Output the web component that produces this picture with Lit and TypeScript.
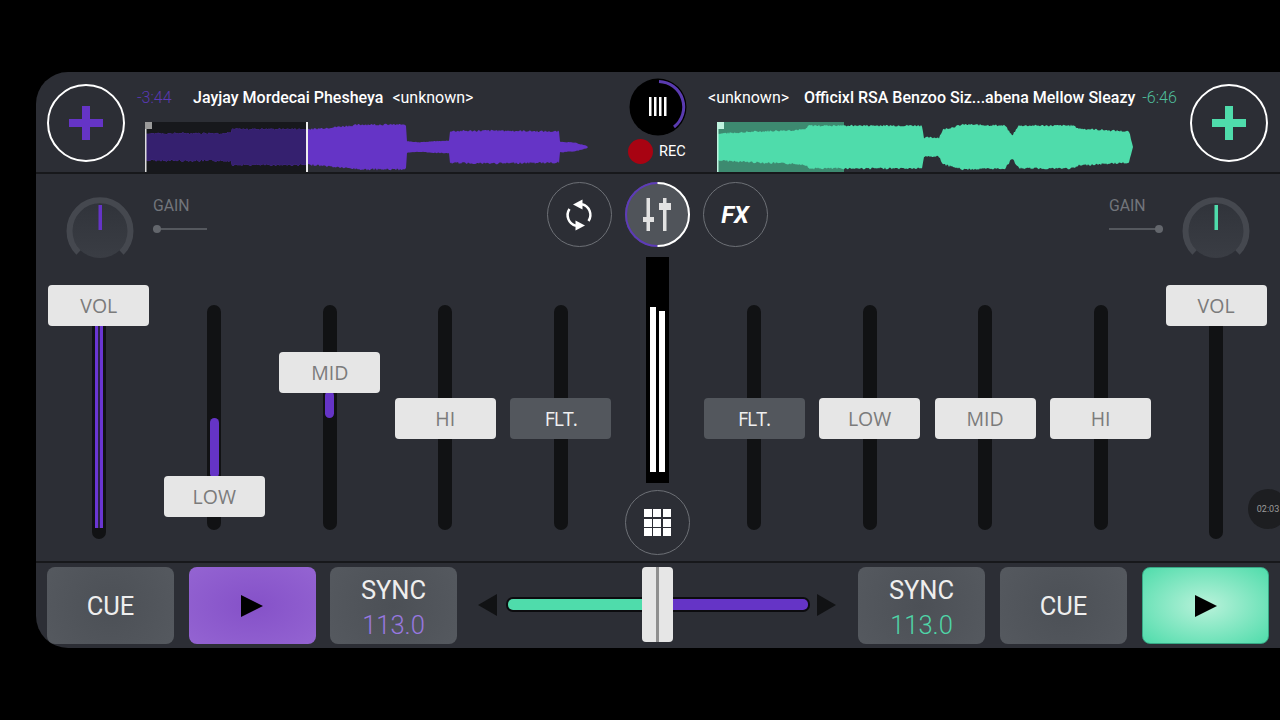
import { LitElement, html, css, svg, unsafeCSS } from "lit";
import { customElement } from "lit/decorators.js";

const PURPLE = "#6534c6";
const GREEN = "#4fdcab";

type Pt = [number, number];

function envelope(points: Pt[]): string {
  const top: string[] = [];
  const bottom: string[] = [];
  let seed = 7;
  const rnd = () => {
    seed = (seed * 9301 + 49297) % 233280;
    return seed / 233280;
  };
  for (let i = 0; i < points.length - 1; i++) {
    const [x0, h0] = points[i];
    const [x1, h1] = points[i + 1];
    for (let x = x0; x < x1; x += 1) {
      const t = (x - x0) / (x1 - x0);
      const h = h0 + (h1 - h0) * t;
      const n = h > 8 ? 1.9 : 0.6;
      top.push(`${x},${(25 - h - rnd() * n).toFixed(1)}`);
      bottom.unshift(`${x},${(25 + h + rnd() * n).toFixed(1)}`);
    }
  }
  const [lx] = points[points.length - 1];
  return [...top, `${lx},25`, ...bottom].join(" ");
}

const LEFT_WAVE: Pt[] = [
  [0, 12.5], [86, 13], [87, 17], [162, 17], [168, 17], [217, 21.5], [258, 21.5], [261, 20], [262, 5.5], [275, 4.5],
  [290, 5.5], [304, 6], [305, 15], [350, 15.5], [414, 14.5], [415, 5], [430, 4], [436, 2.5], [443, 0.5],
];
const RIGHT_WAVE: Pt[] = [
  [0, 12.5], [40, 14.5], [88, 16.5], [92, 20.5], [140, 20.5], [170, 20.5], [205, 20.5], [207, 8.5], [222, 8.5], [226, 16.5],
  [246, 21.5], [288, 20.5], [295, 10.5], [302, 20.5], [356, 20.5], [362, 17.5], [412, 14.5], [416, 0],
];

const plus = (color: string) => html`<div class="plus">
  <svg width="34" height="34" viewBox="0 0 34 34"><path fill=${color} d="M13 0h8v13h13v8H21v13h-8V21H0v-8h13z"/></svg>
</div>`;

const knob = (color: string) => html`<svg class="knob" width="68" height="68" viewBox="0 0 68 68">
  <defs><linearGradient id="kn-${color.slice(1)}" x1="0" y1="0" x2="0" y2="1"><stop offset="0" stop-color="#30333a"/><stop offset="1" stop-color="#3a3d44"/></linearGradient></defs>
  <circle cx="34" cy="34" r="29" fill="url(#kn-${color.slice(1)})"/>
  <path d="M12.5 57.5A30.5 30.5 0 1 1 55.5 57.5" fill="none" stroke="#45484f" stroke-width="6"/>
  <rect x="32.5" y="10" width="3.5" height="25" fill=${color}/>
</svg>`;

function fader(label: string, top: number, opts: { fill?: [number, number]; vol?: boolean; purple?: boolean; dark?: boolean } = {}) {
  return html`<div class="fader">
    <div class="track ${opts.vol ? "long" : ""}">
      ${opts.vol && opts.purple ? html`<div class="volfill"></div>` : ""}
    </div>
    ${opts.fill ? html`<div class="fill" style="top:${opts.fill[0]}px;height:${opts.fill[1]}px"></div>` : ""}
    <div class="handle ${opts.dark ? "dark" : ""}" style="top:${top}px">${label}</div>
  </div>`;
}

function playIcon() {
  return svg`<svg width="22" height="22" viewBox="0 0 22 22"><path d="M0 0L22 11L0 22z" fill="#000"/></svg>`;
}

@customElement("app-root")
export class AppRoot extends LitElement {
  static styles = css`
    :host { display: block; width: 1280px; height: 720px; background: #000; overflow: hidden; position: relative; font-family: Roboto, "Liberation Sans", sans-serif; }
    .page { box-sizing: border-box; height: 720px; padding: 72px 0 72px 36px; }
    .device { height: 576px; background: #2c2e35; border-radius: 32px 0 0 32px; display: flex; flex-direction: column; overflow: hidden; }

    .top { height: 100px; display: flex; padding-left: 11px; border-bottom: 2px solid #17181b; box-sizing: content-box; }
    .plus { width: 74px; height: 74px; margin-top: 12px; flex: none; border: 2px solid #fff; border-radius: 50%; display: flex; align-items: center; justify-content: center; }
    .deck { width: 490px; flex: none; display: flex; flex-direction: column; }
    .deck.left { margin-left: 12px; }
    .titles { height: 50px; display: flex; align-items: center; font-size: 16px; color: #fff; white-space: nowrap; box-sizing: border-box; padding-top: 1px; }
    .titles .time { font-weight: 300; }
    .titles b { font-weight: 500; }
    .deck.left .time { color: #5a39b4; width: 56px; }
    .deck.left .unk { margin-left: 9px; }
    .deck.right .titles { padding-left: 18px; }
    .deck.right b { margin-left: 15px; }
    .deck.right .time { color: #4fbf9c; margin-left: 7px; }
    .wave { display: block; }
    .deck.left .wave { margin-left: 8px; }
    .deck.right .wave { margin-left: 27px; }
    .centre { width: 63px; flex: none; display: flex; flex-direction: column; align-items: flex-start; padding-top: 6px; box-sizing: border-box; }
    .centre > svg { margin-left: 2px; }
    .rec { display: flex; align-items: center; gap: 6px; margin-top: 3px; font-size: 14.5px; color: #fff; margin-left: 1px; font-weight: 400; }
    .dot { width: 25px; height: 25px; border-radius: 50%; background: #a80312; }
    .deck.right + .plus { margin-left: 10px; }

    .mid { flex: none; height: 387px; display: flex; flex-direction: column; }
    .mid-top { height: 83px; display: grid; grid-template-columns: 1fr auto 1fr; padding: 0 30px; flex: none; }
    .gain { display: flex; padding-top: 21px; gap: 19px; }
    .gain.r { justify-content: flex-end; }
    .gain-info { width: 54px; color: #72757b; font-size: 15.8px; font-weight: 400; padding-top: 2px; line-height: 18px; }
    .gain-line { margin-top: 13px; height: 2px; background: #55585e; position: relative; }
    .gain-line::after { content: ""; position: absolute; width: 8px; height: 8px; border-radius: 50%; background: #63666c; top: -3px; }
    .gain.l .gain-line::after { left: 0; }
    .gain.r .gain-line::after { right: 0; }
    .knob { flex: none; }
    .btns { display: flex; gap: 13px; padding-top: 8px; margin: 0 1px 0 -1px; }
    .cb { width: 65px; height: 65px; box-sizing: border-box; border-radius: 50%; border: 1.5px solid #6d7076; display: flex; align-items: center; justify-content: center; color: #fff; }
    .cb.fx { font-size: 24px; font-weight: 700; font-style: italic; }
    .cb.mix { border: none; position: relative; background: #50545a; }
    .cb.mix > svg.ring { position: absolute; left: 0; top: 0; }

    .mid-bottom { height: 304px; display: flex; padding: 0 6.15px 0 5px; }
    .bank { display: grid; grid-template-columns: repeat(5, 115.5px); }
    .fader { position: relative; height: 304px; }
    .track { position: absolute; left: 50.75px; top: 48px; width: 14px; height: 225px; border-radius: 7px; background: #111214; }
    .track.long { top: 40px; height: 242px; }
    .volfill { position: absolute; left: 3px; width: 8.5px; box-sizing: border-box; top: 29px; bottom: 11px; background: #2a2540; border-left: 3px solid #6a36d2; border-right: 3px solid #6a36d2; }
    .fill { position: absolute; left: 53.25px; width: 9px; border-radius: 4.5px; background: ${unsafeCSS(PURPLE)}; }
    .handle { position: absolute; left: 7.25px; width: 101px; height: 41px; border-radius: 4px; background: #e6e6e6; color: #7b7b7b; font: 400 19.5px "Open Sans", sans-serif; display: flex; align-items: center; justify-content: center; }
    .handle.dark { background: #53575d; color: #f0f0f0; letter-spacing: -1px; }
    .vu-col { width: 77.85px; flex: none; display: flex; flex-direction: column; align-items: center; }
    .vu { width: 23px; height: 226px; background: #000; display: flex; align-items: flex-end; justify-content: center; gap: 3px; padding-bottom: 11px; box-sizing: border-box; }
    .vu i { width: 6px; background: #fff; display: block; }
    .grid-btn { margin-top: 7px; }
    .cells { display: grid; grid-template-columns: repeat(3, 8px); gap: 1.5px; }
    .cells i { height: 8px; background: #fff; display: block; }

    .bottom { flex: 1; border-top: 2px solid #17181b; display: flex; padding: 4px 11px 0 11px; box-sizing: border-box; }
    .pads { display: flex; flex: none; }
    .pads.l { gap: 14.5px; }
    .pads.r { gap: 15px; }
    .pad { width: 127px; height: 77px; box-sizing: border-box; flex: none; border-radius: 8px; background: radial-gradient(circle at 50% 50%, #4c5056, #55595f); color: #eee; display: flex; flex-direction: column; align-items: center; justify-content: center; font-size: 25.5px; }
    .pad.play-p { background: radial-gradient(ellipse at 50% 50%, #8551c8, #9464d2); }
    .pad.play-g { background: radial-gradient(ellipse at 50% 50%, #b9f2da, #4fdcab); border: 1px solid #37a885; }
    .pad.sync { line-height: 35px; padding-top: 4px; }
    .pad .bpm { font-weight: 300; font-size: 25.5px; }
    .bpm.p { color: #9878e0; }
    .bpm.g { color: #4fd6a8; }
    .xf { flex: 1; display: flex; align-items: center; gap: 9px; margin: 0 22px 0 21px; position: relative; height: 75px; }
    .xf svg { flex: none; }
    .xf-track { flex: 1; height: 15px; background: #0c0c0f; border-radius: 7px; padding: 2px; box-sizing: border-box; display: flex; margin-right: -2px; }
    .xf-l { width: 136px; background: ${unsafeCSS(GREEN)}; border-radius: 5px 0 0 5px; }
    .xf-r { flex: 1; background: ${unsafeCSS(PURPLE)}; border-radius: 0 5px 5px 0; }
    .xf-h { position: absolute; left: 164px; top: 0; width: 31px; height: 75px; border-radius: 4px; background: linear-gradient(90deg, #e6e6e6 0 14px, #8f8f8f 14px 17px, #e6e6e6 17px); }

    .stamp { position: absolute; left: 1248px; top: 489px; width: 40px; height: 40px; border-radius: 50%; background: #1d1e21; color: #9b9b9b; font-size: 9px; display: flex; align-items: center; justify-content: center; }
  `;

  render() {
    const leftWave = envelope(LEFT_WAVE);
    return html`<div class="page"><div class="device">
      <div class="top">
        ${plus(PURPLE)}
        <div class="deck left">
          <div class="titles"><span class="time">-3:44</span><b>Jayjay Mordecai Phesheya</b><span class="unk">&lt;unknown&gt;</span></div>
          <svg class="wave" width="470" height="50" viewBox="0 0 470 50">
            <defs><clipPath id="played"><rect x="0" width="162" height="50"/></clipPath></defs>
            <rect x="0" width="162" height="50" fill="#17181c"/>
            <polygon points=${leftWave} fill=${PURPLE}/>
            <polygon points=${leftWave} fill="#35206f" clip-path="url(#played)"/>
            <rect x="0" y="0" width="1.5" height="50" fill="#ddd"/>
            <rect x="0" y="0" width="7" height="7" fill="#9a9a9a"/>
            <rect x="161" y="0" width="2" height="50" fill="#eee"/>
          </svg>
        </div>
        <div class="centre">
          <svg width="58" height="58" viewBox="0 0 58 58">
            <circle cx="29" cy="29" r="28.5" fill="#000"/>
            <path d="M30 3.5A25.5 25.5 0 0 1 45 49" fill="none" stroke="#5a3bb0" stroke-width="3"/>
            <g fill="#fff"><rect x="20" y="19" width="2.5" height="19"/><rect x="25" y="19" width="2.5" height="19"/><rect x="30" y="19" width="2.5" height="19"/><rect x="35" y="19" width="2.5" height="19"/></g>
          </svg>
          <div class="rec"><span class="dot"></span>REC</div>
        </div>
        <div class="deck right">
          <div class="titles"><span>&lt;unknown&gt;</span><b>Officixl RSA Benzoo Siz...abena Mellow Sleazy</b><span class="time">-6:46</span></div>
          <svg class="wave" width="440" height="50" viewBox="0 0 440 50">
            <rect x="0" width="127" height="50" fill="#3d8a70"/>
            <polygon points=${envelope(RIGHT_WAVE)} fill=${GREEN}/>
            <rect x="0" y="0" width="1.5" height="50" fill="#bff3df"/>
            <rect x="0" y="0" width="7" height="7" fill="#bff3df"/>
          </svg>
        </div>
        ${plus(GREEN)}
      </div>

      <div class="mid">
        <div class="mid-top">
          <div class="gain l">${knob(PURPLE)}<div class="gain-info">GAIN<div class="gain-line"></div></div></div>
          <div class="btns">
            <div class="cb">
              <svg width="30" height="32" viewBox="0 0 30 32" fill="none" stroke="#fff" stroke-width="2.5">
                <path d="M18 5.2A11 11 0 0 1 24.5 22"/><path d="M12 26.8A11 11 0 0 1 5.5 10"/>
                <path d="M9 5.5L18.5 0.5V10.5z" fill="#fff" stroke="none"/><path d="M21 26.5L11.5 21.5V31.5z" fill="#fff" stroke="none"/>
              </svg>
            </div>
            <div class="cb mix">
              <svg class="ring" width="65" height="65" viewBox="0 0 65 65" fill="none" stroke-width="2"><path d="M32.5 1A31.5 31.5 0 0 0 32.5 64" stroke="#5d3bb8"/><path d="M32.5 1A31.5 31.5 0 0 1 32.5 64" stroke="#fff"/></svg>
              <svg width="28" height="33" viewBox="0 0 28 33" fill="#e2e2e2">
                <rect x="3.5" y="0" width="3.5" height="33"/><rect x="0" y="19" width="11" height="5"/>
                <rect x="20" y="0" width="3.5" height="33"/><rect x="16" y="5" width="12" height="7"/>
              </svg>
            </div>
            <div class="cb fx">FX</div>
          </div>
          <div class="gain r"><div class="gain-info">GAIN<div class="gain-line"></div></div>${knob(GREEN)}</div>
        </div>
        <div class="mid-bottom">
          <div class="bank">
            ${fader("VOL", 28, { vol: true, purple: true })}
            ${fader("LOW", 219, { fill: [161, 60] })}
            ${fader("MID", 95, { fill: [134, 27] })}
            ${fader("HI", 141)}
            ${fader("FLT.", 141, { dark: true })}
          </div>
          <div class="vu-col">
            <div class="vu"><i style="height:165px"></i><i style="height:161px"></i></div>
            <div class="cb grid-btn"><div class="cells">${Array.from({ length: 9 }, () => html`<i></i>`)}</div></div>
          </div>
          <div class="bank">
            ${fader("FLT.", 141, { dark: true })}
            ${fader("LOW", 141)}
            ${fader("MID", 141)}
            ${fader("HI", 141)}
            ${fader("VOL", 28, { vol: true })}
          </div>
        </div>
      </div>

      <div class="bottom">
        <div class="pads l">
          <div class="pad">CUE</div>
          <div class="pad play-p">${playIcon()}</div>
          <div class="pad sync">SYNC<span class="bpm p">113.0</span></div>
        </div>
        <div class="xf">
          <svg width="19" height="22" viewBox="0 0 19 22"><path d="M0 11L19 0V22z" fill="#111214"/></svg>
          <div class="xf-track"><div class="xf-l"></div><div class="xf-r"></div></div>
          <svg width="19" height="22" viewBox="0 0 19 22"><path d="M19 11L0 0V22z" fill="#111214"/></svg>
          <div class="xf-h"></div>
        </div>
        <div class="pads r">
          <div class="pad sync">SYNC<span class="bpm g">113.0</span></div>
          <div class="pad">CUE</div>
          <div class="pad play-g">${playIcon()}</div>
        </div>
      </div>
    </div></div>
    <div class="stamp">02:03</div>`;
  }
}
